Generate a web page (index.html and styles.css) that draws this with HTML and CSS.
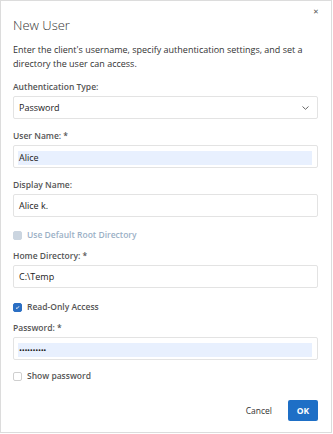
FILE: index.html
```html
<!DOCTYPE html>
<html>
<head>
<meta charset="utf-8">
<link rel="stylesheet" href="styles.css">
</head>
<body>
<div class="dialog">
  <span class="close">&#x2715;</span>
  <h1 class="title">New User</h1>
  <p class="desc">Enter the client's username, specify authentication settings, and set a directory the user can access.</p>

  <div class="field first">
    <div class="label">Authentication Type:</div>
    <div class="input select"><span>Password</span>
      <svg class="chev" width="7" height="4" viewBox="0 0 7 4"><path d="M0.5 0.5 L3.5 3.3 L6.5 0.5" fill="none" stroke="#666" stroke-width="1"/></svg>
    </div>
  </div>

  <div class="field">
    <div class="label">User Name: *</div>
    <div class="input"><div class="autofill">Alice</div></div>
  </div>

  <div class="field">
    <div class="label">Display Name:</div>
    <div class="input"><span class="val">Alice k.</span></div>
  </div>

  <div class="check disabled"><span class="box"></span><span>Use Default Root Directory</span></div>

  <div class="field after-check">
    <div class="label">Home Directory: *</div>
    <div class="input"><span class="val">C:\Temp</span></div>
  </div>

  <div class="check checked"><span class="box"><svg width="9" height="9" viewBox="0 0 9 9"><path d="M2.6 4.8 L3.9 6 L6.4 3" fill="none" stroke="#fff" stroke-width="1.2"/></svg></span><span>Read-Only Access</span></div>

  <div class="field after-check">
    <div class="label">Password: *</div>
    <div class="input"><div class="autofill dots">&#x2022;&#x2022;&#x2022;&#x2022;&#x2022;&#x2022;&#x2022;&#x2022;&#x2022;&#x2022;</div></div>
  </div>

  <div class="check last"><span class="box"></span><span>Show password</span></div>

  <div class="footer">
    <button class="btn cancel">Cancel</button>
    <button class="btn ok">OK</button>
  </div>
</div>
</body>
</html>
```

FILE: styles.css
```css
html, body {
  margin: 0;
  padding: 0;
  background: #fff;
}
body {
  font-family: "Open Sans", "Noto Sans", sans-serif;
  color: #333;
}
.dialog {
  position: relative;
  box-sizing: border-box;
  width: 332px;
  height: 433px;
  border: 1px solid #dcdcdc;
  padding: 15px 13px 11px 12px;
  display: flex;
  flex-direction: column;
}
.close {
  position: absolute;
  top: 6px;
  right: 12px;
  font-size: 7px;
  color: #555;
  line-height: 10px;
}
.title {
  margin: 0;
  font-size: 13px;
  line-height: 18px;
  font-weight: 300;
  color: #333;
}
.desc {
  margin: 9px 0 0;
  font-size: 9px;
  line-height: 14px;
  color: #333;
}
.field {
  margin-top: 11px;
  display: flex;
  flex-direction: column;
  gap: 3px;
}
.field.first {
  margin-top: 10px;
}
.field.after-check {
  margin-top: 9px;
}
.label {
  font-size: 8.5px;
  line-height: 12px;
  font-weight: 600;
  color: #555;
}
.input {
  box-sizing: border-box;
  height: 23px;
  border: 1px solid #e3e3e3;
  border-radius: 2px;
  display: flex;
  align-items: center;
  padding: 0 5px;
  font-size: 9px;
  color: #222;
}
.select {
  justify-content: space-between;
  padding-right: 8px;
}
.autofill {
  flex: 1;
  margin: 4px 0 2px -1px;
  height: 14px;
  background: #e8f0fe;
  display: flex;
  align-items: center;
  padding-left: 1px;
}
.dots {
  font-size: 8px;
  letter-spacing: -0.3px;
}
.check {
  margin-top: 12px;
  display: flex;
  align-items: center;
  gap: 5px;
  font-size: 8.5px;
  line-height: 12px;
  font-weight: 600;
  color: #555;
}
.check.checked {
  margin-top: 13px;
}
.check.last {
  margin-top: 10px;
}
.box {
  box-sizing: border-box;
  width: 9px;
  height: 9px;
  border-radius: 2px;
  border: 1px solid #cfcfcf;
  background: #fff;
  display: flex;
  align-items: center;
  justify-content: center;
}
.box svg {
  display: block;
}
.check.disabled {
  color: #9bb0c6;
}
.check.disabled .box {
  background: #cbd5e0;
  border-color: #cbd5e0;
}
.check.checked .box {
  background: #2b6fc4;
  border-color: #2b6fc4;
}
.footer {
  margin-top: auto;
  display: flex;
  justify-content: flex-end;
  align-items: center;
  gap: 8px;
}
.btn {
  font-family: "Open Sans", sans-serif;
  font-size: 8.5px;
  height: 21px;
  border: none;
  border-radius: 2px;
  padding: 0 8px;
  cursor: pointer;
}
.cancel {
  background: transparent;
  color: #333;
}
.ok {
  width: 30px;
  padding: 0;
  background: #1e6fc6;
  color: #fff;
  font-weight: 700;
}
```
